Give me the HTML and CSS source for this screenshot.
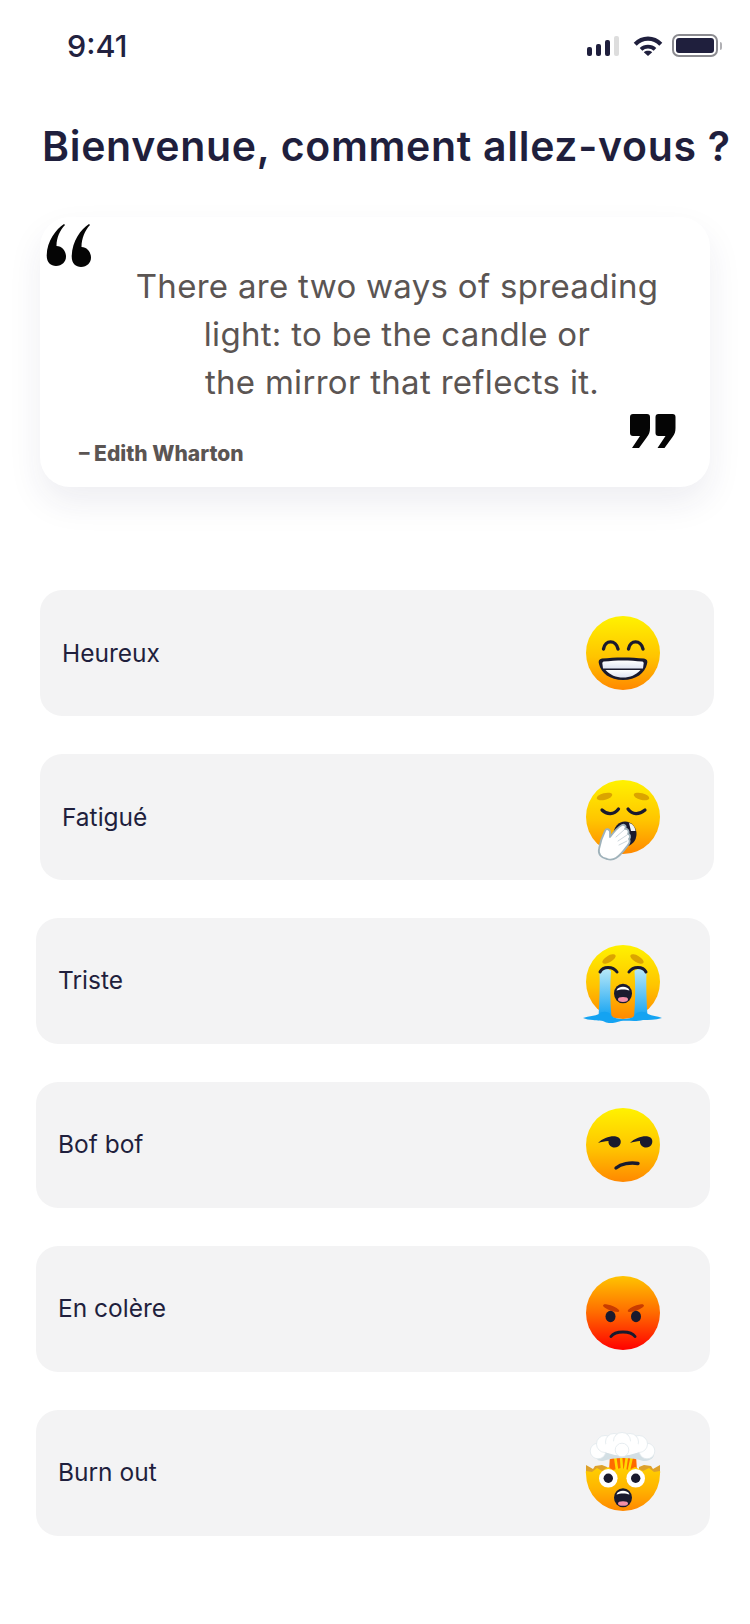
FILE: index.html
```html
<!DOCTYPE html>
<html lang="fr">
<head>
  <meta charset="UTF-8" />
  <meta name="viewport" content="width=device-width, initial-scale=1.0" />
  <title>Bienvenue</title>
  <link rel="stylesheet" href="styles.css">
</head>

<body>
  <svg class="defs" width="0" height="0">
    <defs>
      <linearGradient id="faceYellow" x1="0" y1="0" x2="0" y2="1">
        <stop offset="0" stop-color="#fff200" />
        <stop offset="0.55" stop-color="#ffc400" />
        <stop offset="1" stop-color="#ff8800" />
      </linearGradient>
      <linearGradient id="faceOrange" x1="0" y1="0" x2="0" y2="1">
        <stop offset="0" stop-color="#ffd000" />
        <stop offset="0.5" stop-color="#ffb400" />
        <stop offset="1" stop-color="#ff8800" />
      </linearGradient>
      <linearGradient id="faceRed" x1="0" y1="0" x2="0" y2="1">
        <stop offset="0" stop-color="#ffc400" />
        <stop offset="0.5" stop-color="#ff6a00" />
        <stop offset="1" stop-color="#ff0000" />
      </linearGradient>
      <linearGradient id="tear" x1="0" y1="0" x2="0" y2="1">
        <stop offset="0" stop-color="#b8e8f8" />
        <stop offset="1" stop-color="#14a3f2" />
      </linearGradient>
      <linearGradient id="teeth" x1="0" y1="0" x2="0" y2="1">
        <stop offset="0" stop-color="#ffffff" />
        <stop offset="1" stop-color="#dfe4f2" />
      </linearGradient>
    </defs>
  </svg>

  <div class="page">
    <div class="status">
      <span class="time">9:41</span>
      <div class="status-icons">
        <div class="signal">
          <span class="bar bar1"></span>
          <span class="bar bar2"></span>
          <span class="bar bar3"></span>
          <span class="bar bar4"></span>
        </div>
        <svg class="wifi" width="30" height="20" viewBox="0 0 30 20">
          <path d="M2.200 8.200C9.500 0.800 20.500 0.800 27.800 8.200" fill="none" stroke="#1f1f3d" stroke-width="4.200" />
          <path d="M8 13.300C12 9.600 18 9.600 22 13.300" fill="none" stroke="#1f1f3d" stroke-width="3.800" />
          <path d="M10.800 16.200C13.200 14.400 16.800 14.400 19.200 16.200L15 20Z" fill="#1f1f3d" />
        </svg>
        <div class="battery">
          <div class="battery-fill"></div>
        </div>
        <span class="battery-nub"></span>
      </div>
    </div>

    <h1>Bienvenue, comment allez-vous ?</h1>

    <div class="quote-card">
      <svg class="quote-open" width="47" height="44" viewBox="0 0 47 42" preserveAspectRatio="none">
        <path d="M18 0C10 5 1 16 0.700 30C0.700 37 5 40 10 40C16 40 20 36 20 31C20 26 16 21 10.500 21C10.500 13 14 6 19 1Z" fill="#050505" />
        <path d="M43 0C35 5 26 16 25.700 31C25.700 38 30 41 35 41C41 41 45 37 45 32C45 27 41 22 35.500 22C35.500 14 39 6 44 1Z" fill="#050505" />
      </svg>
      <p class="quote-text">There are two ways of spreading<br>light: to be the candle or<br><span class="quote-last">the mirror that reflects it.</span></p>
      <p class="quote-author">– Edith Wharton</p>
      <svg class="quote-close" width="46" height="35" viewBox="0 0 46 35">
        <path d="M3 0H17C19 0 20 1 20 3V14C20 18 19 20 17 23L9 34H2L10 22H3C1 22 0 21 0 19V3C0 1 1 0 3 0Z" fill="#050505" />
        <path d="M28.500 0H42.500C44.500 0 45.500 1 45.500 3V14C45.500 18 44.500 20 42.500 23L34.500 34H27.500L35.500 22H28.500C26.500 22 25.500 21 25.500 19V3C25.500 1 26.500 0 28.500 0Z" fill="#050505" />
      </svg>
    </div>

    <div class="moods">
      <div class="mood shifted">
        <span class="mood-label">Heureux</span>
        <svg class="emoji" viewBox="0 0 80 80">
          <circle cx="40" cy="40" r="37" fill="url(#faceYellow)" />
          <path d="M20.500 36C22 26.500 33 26.500 35 36" fill="none" stroke="#1a1a2e" stroke-width="3.400" stroke-linecap="round" />
          <path d="M45.500 36C47 26.500 58 26.500 60 36" fill="none" stroke="#1a1a2e" stroke-width="3.400" stroke-linecap="round" />
          <path d="M19 45.500C32 44 48 44 61 45.500C64 46 65 48 64 51C62 60 53 67 40 67C27 67 18 60 16 51C15 48 16 46 19 45.500Z" fill="#1a1a2e" />
          <path d="M21 48.500C33 47 47 47 59 48.500C60.500 48.700 61 50 60.500 51.500L60 55.500H20L19.500 51.500C19 50 19.500 48.700 21 48.500Z" fill="url(#teeth)" />
          <path d="M22.500 57H57.500C53 62 47 64.500 40 64.500C33 64.500 27 62 22.500 57Z" fill="url(#teeth)" />
        </svg>
      </div>

      <div class="mood shifted">
        <span class="mood-label">Fatigué</span>
        <svg class="emoji" viewBox="0 0 80 80">
          <circle cx="40" cy="40" r="37" fill="url(#faceYellow)" />
          <ellipse cx="21.500" cy="19.500" rx="8" ry="3.300" transform="rotate(-14 21.500 19.500)" fill="#dba400" />
          <ellipse cx="58.500" cy="19.500" rx="8" ry="3.300" transform="rotate(14 58.500 19.500)" fill="#dba400" />
          <path d="M19 33C24 38 31 38 35.500 32" fill="none" stroke="#1a1a2e" stroke-width="3.200" stroke-linecap="round" />
          <path d="M45 32C49.500 38 56 38 62 33" fill="none" stroke="#1a1a2e" stroke-width="3.200" stroke-linecap="round" />
          <ellipse cx="42" cy="57" rx="11.500" ry="12.500" fill="#1a1a2e" />
          <path d="M46 46C50 47 52 50 52.500 54L48 54Z" fill="#f2f4f8" />
          <path d="M24 82C18 81 15 77 16 72C17 66 19 60 22 54C23 51 27 52 27 55L27 60C30 56 35 50 39 48C42 47 44 50 42 52C44 51 47 54 45 57C47 57 48 60 46 62C47 63 47 66 45 68C42 72 38 78 33 81C30 83 27 83 24 82Z" fill="#ffffff" stroke="#9fb2ba" stroke-width="1.800" stroke-linejoin="round" />
          <path d="M33 60L41 53M35 64L44 58M36 68L44 64" fill="none" stroke="#ccd6dc" stroke-width="1" stroke-linecap="round" />
        </svg>
      </div>

      <div class="mood">
        <span class="mood-label">Triste</span>
        <svg class="emoji" viewBox="0 0 80 80">
          <circle cx="40" cy="41" r="37" fill="url(#faceYellow)" />
          <ellipse cx="26" cy="18" rx="7.500" ry="3.300" transform="rotate(-30 26 18)" fill="#dba400" />
          <ellipse cx="54" cy="18" rx="7.500" ry="3.300" transform="rotate(30 54 18)" fill="#dba400" />
          <path d="M16.500 30C20 27 25 27 28 30C27 44 27 60 28.500 76H15.500C16.500 60 17 44 16.500 30Z" fill="url(#tear)" />
          <path d="M51.500 30C55 27 60 27 63.500 30C63 44 63.500 60 64.500 76H51C52.500 60 52.500 44 51.500 30Z" fill="url(#tear)" />
          <path d="M0 77C6 75 12 75 16 73C18 70 26 70 28 74C30 77 34 78 40 78C46 78 50 77 52 74C54 70 62 70 65 73C69 75 74 75 79 77C72 79 66 79 60 79C52 81 44 79 38 80C32 82 26 83 22 81C20 79 14 80 10 79C6 79 3 78 0 77Z" fill="#14a3f2" />
          <path d="M17 31C20 25 30 25 34 31" fill="none" stroke="#1a1a2e" stroke-width="3" stroke-linecap="round" />
          <path d="M46 31C50 25 60 25 63 31" fill="none" stroke="#1a1a2e" stroke-width="3" stroke-linecap="round" />
          <ellipse cx="40" cy="52.500" rx="9" ry="9.800" fill="#1a1a2e" />
          <path d="M33.500 49.500C35 44.500 45 44.500 46.500 49.500C43 48 37 48 33.500 49.500Z" fill="#ffffff" />
          <ellipse cx="40" cy="58.500" rx="5" ry="2.400" fill="#f28fa8" />
        </svg>
      </div>

      <div class="mood">
        <span class="mood-label">Bof bof</span>
        <svg class="emoji" viewBox="0 0 80 80">
          <circle cx="40" cy="40" r="37" fill="url(#faceYellow)" />
          <path d="M15 38C20 33 28 30.500 33 31.500C37 32.500 38.500 35.500 37.500 38.500C36.500 42 32 43.500 29 42C26.500 41 25 38.500 25.500 36C22 36 18 37 15 38Z" fill="#1a1a2e" />
          <path d="M47 38C52 33 60 30.500 65 31.500C69 32.500 70 35.500 69 38.500C68 42 63.500 43.500 60.500 42C58 41 56.500 38.500 57 36C54 36 50 37 47 38Z" fill="#1a1a2e" />
          <path d="M33 63C38 59 47 57 55 58.500" fill="none" stroke="#1a1a2e" stroke-width="3.400" stroke-linecap="round" />
        </svg>
      </div>

      <div class="mood">
        <span class="mood-label">En colère</span>
        <svg class="emoji low" viewBox="0 0 80 80">
          <circle cx="40" cy="40" r="37" fill="url(#faceRed)" />
          <path d="M20 33C20 31 22 31 24 31.500C29 32.500 33 34 36 37C36.500 38 36 39 35 39C29 38.500 24 37 20 33Z" fill="#c83c00" />
          <path d="M61 33C61 31 59 31 57 31.500C52 32.500 48 34 45 37C44.500 38 45 39 46 39C52 38.500 57 37 61 33Z" fill="#c83c00" />
          <ellipse cx="27.500" cy="43.500" rx="5" ry="5.800" fill="#1a1a2e" />
          <ellipse cx="53" cy="43.500" rx="5" ry="5.800" fill="#1a1a2e" />
          <path d="M28 63.500C32 57.500 48 57.500 52 63.500" fill="none" stroke="#1a1a2e" stroke-width="3" stroke-linecap="round" />
        </svg>
      </div>

      <div class="mood">
        <span class="mood-label">Burn out</span>
        <svg class="emoji" viewBox="0 0 80 80">
          <path d="M27 22H53L54 38H26Z" fill="#ff6a00" />
          <path d="M32 23L34 37M38 23L39 37M44 23L42 37M49 23L46 37" stroke="#ffd800" stroke-width="2.600" />
          <path d="M14 26C11 18 12 12 20 11C24 4 33 2 39 3C46 2 54 4 58 10C66 12 72 16 71 22C70 26 66 28 60 28C50 24 30 24 20 28C18 28 15 28 14 26Z" fill="#d3dfe4" />
          <g fill="#ffffff" stroke="#e1e9ec" stroke-width="0.800">
            <circle cx="15" cy="18" r="7.800" />
            <circle cx="64" cy="18" r="7.800" />
            <circle cx="22" cy="11" r="8.500" />
            <circle cx="56" cy="11" r="8.500" />
            <circle cx="31" cy="9" r="8.500" />
            <circle cx="47" cy="9" r="8.500" />
            <circle cx="39" cy="8" r="8.500" />
          </g>
          <ellipse cx="39" cy="15" rx="19" ry="7.500" fill="#ffffff" />
          <circle cx="39" cy="17" r="6.800" fill="#ffffff" stroke="#e1e9ec" stroke-width="0.800" />
          <path d="M3 32L10 36L12 33L19 32L24 34V40H3Z" fill="#dda02a" />
          <path d="M77 32L70 36L68 33L61 32L56 34V40H77Z" fill="#dda02a" />
          <path d="M3 38L9 39L14 35L19 38L25 34L30 37L38 35L46 37L52 34L60 38L66 35L71 39L77 38C77.500 39 77 40 77 41A37 37 0 0 1 3 41C3 40 2.500 39 3 38Z" fill="url(#faceOrange)" />
          <circle cx="25.300" cy="45.300" r="9.300" fill="#ffffff" />
          <circle cx="52.700" cy="45.300" r="9.300" fill="#ffffff" />
          <circle cx="25.300" cy="45.300" r="4.700" fill="#1a1a2e" />
          <circle cx="52.700" cy="45.300" r="4.700" fill="#1a1a2e" />
          <ellipse cx="40" cy="64.700" rx="9" ry="9.500" fill="#1a1a2e" />
          <path d="M33.500 61.500C35 56.500 45 56.500 46.500 61.500C43 60 37 60 33.500 61.500Z" fill="#ffffff" />
          <ellipse cx="40" cy="70.500" rx="5" ry="2.300" fill="#f28fa8" />
        </svg>
      </div>
    </div>
  </div>
</body>
</html>
```
FILE: styles.css
```css
body {
  font-family: 'Inter', 'Liberation Sans', sans-serif;
  background: #ffffff;
  margin: 0;
  padding: 0;
  color: #1f1f3d;
}

.defs {
  display: block;
  height: 0;
}

.page {
  width: 750px;
  height: 1624px;
  overflow: hidden;
}

.status {
  height: 90px;
  padding: 0 28px 0 67px;
  display: flex;
  align-items: center;
  justify-content: space-between;
}

.time {
  font-size: 30.500px;
  font-weight: 500;
  color: #22223f;
}

.status-icons {
  display: flex;
  align-items: center;
  padding-top: 1px;
}

.signal {
  display: flex;
  align-items: flex-end;
  gap: 4px;
  height: 20px;
  margin-right: 14px;
}

.bar {
  width: 5px;
  border-radius: 2px;
  background: #1f1f3d;
}

.bar1 { height: 9px; }
.bar2 { height: 12px; }
.bar3 { height: 16px; }
.bar4 { height: 20px; background: #dddddd; }

.wifi {
  margin-right: 9px;
}

.battery {
  box-sizing: border-box;
  width: 46px;
  height: 23px;
  padding: 2px;
  border: 2px solid #8b8b90;
  border-radius: 7px;
}

.battery-fill {
  height: 100%;
  background: #1f1f3d;
  border-radius: 3px;
}

.battery-nub {
  width: 2px;
  height: 8px;
  margin-left: 2px;
  background: #b0b0b4;
  border-radius: 0 2px 2px 0;
}

h1 {
  margin: 26px 0 0 42px;
  font-size: 41px;
  line-height: 60px;
  font-weight: 600;
  letter-spacing: 0.7px;
  white-space: nowrap;
  color: #1f1f3d;
}

.quote-card {
  position: relative;
  box-sizing: border-box;
  width: 670px;
  height: 270px;
  margin: 41px 0 0 40px;
  padding-top: 45px;
  background: #ffffff;
  border-radius: 30px;
  box-shadow: 0 16px 34px rgba(40, 40, 90, 0.08);
}

.quote-open {
  position: absolute;
  top: 7px;
  left: 6px;
}

.quote-close {
  position: absolute;
  top: 197px;
  left: 590px;
}

.quote-text {
  margin: 0;
  padding-left: 44px;
  font-size: 33px;
  font-weight: 420;
  line-height: 48px;
  letter-spacing: 0.3px;
  text-align: center;
  color: #5b5553;
}

.quote-last {
  padding-left: 10px;
}

.quote-author {
  margin: 34px 0 0 39px;
  font-size: 21px;
  line-height: 28px;
  font-weight: 800;
  color: #5b5553;
}

.moods {
  margin-top: 103px;
  display: flex;
  flex-direction: column;
  gap: 38px;
}

.mood {
  box-sizing: border-box;
  width: 674px;
  height: 126px;
  margin-left: 36px;
  padding: 0 47px 0 22px;
  display: flex;
  align-items: center;
  justify-content: space-between;
  background: #f3f3f4;
  border-radius: 22px;
}

.mood.shifted {
  margin-left: 40px;
  padding-right: 51px;
}

.mood-label {
  margin-bottom: 2px;
  font-size: 24.500px;
  color: #1f1f3d;
}

.mood.shifted .mood-label {
  margin-bottom: 0;
}

.emoji {
  width: 80px;
  height: 80px;
  overflow: visible;
  flex: none;
}

.emoji.low {
  margin-top: 8px;
}
```
